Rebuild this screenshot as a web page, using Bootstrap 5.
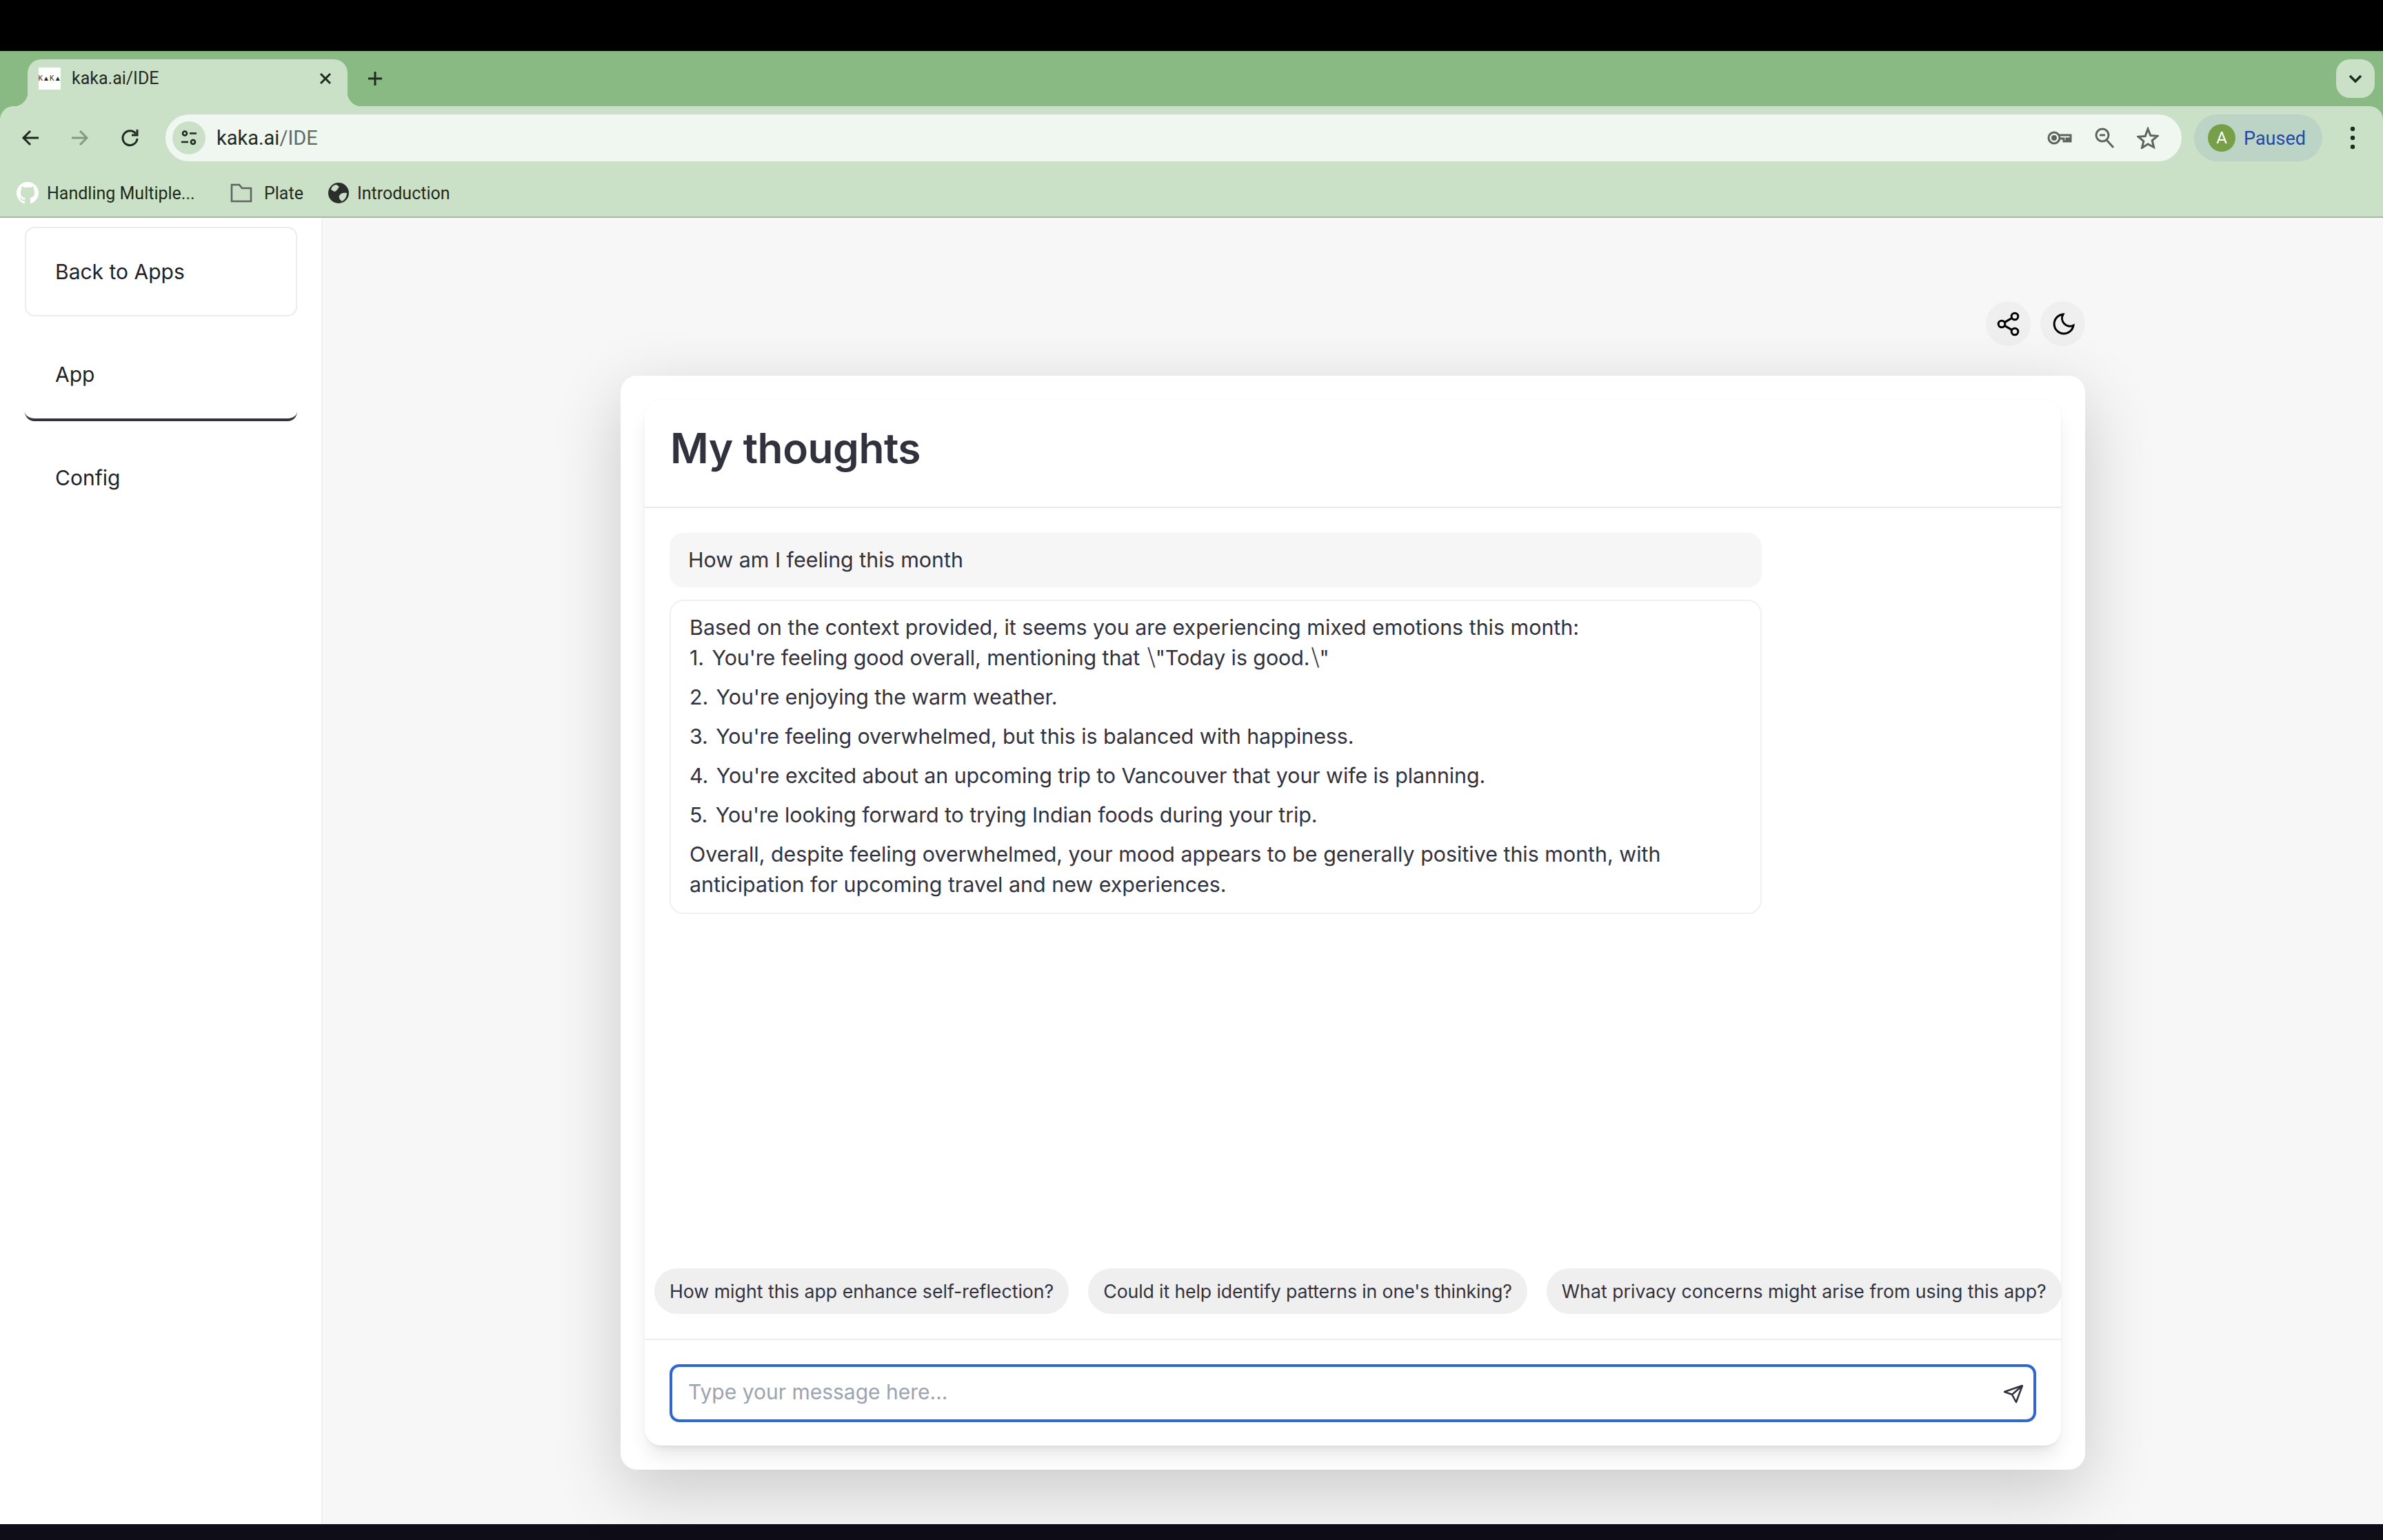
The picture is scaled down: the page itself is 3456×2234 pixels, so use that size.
<!doctype html>
<html lang="en">
<head>
<meta charset="utf-8">
<title>kaka.ai/IDE</title>
<link href="https://cdn.jsdelivr.net/npm/bootstrap@5.3.0/dist/css/bootstrap.min.css" rel="stylesheet">
<style>
html,body{height:2234px;overflow:hidden;background:#000;}
body{width:3456px;display:flex;flex-direction:column;font-family:"Inter","Liberation Sans",sans-serif;}
.top-black{height:74px;background:#000;flex:none;}
.tabstrip{height:80px;background:#89ba84;flex:none;padding-top:12px;padding-left:40px;padding-right:12px;}
.chrome-ui{font-family:"Roboto","Liberation Sans",sans-serif;}
.tabitem{width:464px;height:68px;background:#cbe1c7;border-radius:20px 20px 0 0;position:relative;padding:0 16px 12px;font-size:25px;color:#1f2a20;}
.tabitem::before,.tabitem::after{content:"";position:absolute;bottom:0;width:20px;height:20px;}
.tabitem::before{left:-20px;background:radial-gradient(circle at 0 0,transparent 20px,#cbe1c7 20.5px);}
.tabitem::after{right:-20px;background:radial-gradient(circle at 100% 0,transparent 20px,#cbe1c7 20.5px);}
.favi{width:32px;height:32px;background:#fff;font-size:10px;color:#222;font-weight:400;flex:none;line-height:1;white-space:nowrap;overflow:hidden;font-family:"Liberation Sans",sans-serif;}
.chev-btn{width:56px;height:56px;background:#cbe1c7;border-radius:20px;}
.newtab{margin-left:28px;margin-top:16px;}
.toolbar-wrap{background:#89ba84;flex:none;}
.toolbar{height:92px;background:#cbe1c7;border-radius:20px 20px 0 0;padding:12px 0 0 0;}
.navzone{width:240px;flex:none;padding-left:31px;gap:46px;height:68px;}
.omni{flex:1 1 auto;height:68px;background:#f0f7f1;border-radius:34px;padding:0 33px 0 10px;font-size:29px;color:#1f2a20;}
.omni-chip{width:48px;height:48px;border-radius:50%;background:#cbe1c7;flex:none;margin-right:16px;}
.omni-url{padding-top:2px;}
.dim{color:#5f6b60;}
.omni-icons{gap:32px;}
.paused{width:186px;height:68px;flex:none;background:#bbd4c5;border-radius:34px;margin-left:18px;padding-left:20px;font-size:27px;color:#2149a8;gap:12px;}
.paused-txt{padding-top:2px;}
.avatar{width:40px;height:40px;border-radius:50%;background:#769f48;color:#fff;font-size:24px;flex:none;}
.dots{width:88px;flex:none;height:68px;}
.bookmarks{height:70px;background:#cbe1c7;flex:none;border-bottom:2px solid #a6b9a4;padding:0 0 0 24px;font-size:25px;color:#1f2a20;}
.bm{gap:12px;}
.bm span{padding-top:2px;}
.bm-a{width:310px;}
.bm-b{width:142px;gap:17px;}
.bm-c{gap:12px;}
.mainrow{flex:1 1 auto;min-height:0;background:#f7f7f7;}
.sidepanel{width:468px;flex:none;background:#fff;border-right:2px solid #f0f0f0;padding:13px 35px 0 36px;color:#1f2124;}
.sidelink{height:130px;padding:0 42px;font-size:30px;color:#1f2124;border-radius:14px;display:flex;align-items:center;border:2px solid transparent;margin-bottom:20px;}
.sidelink:hover,.sidelink:focus{color:#1f2124;}
.sidelink.bordered{border-color:#ececec;}
.sidelink.under{border-width:0 0 4px;border-color:#33323f;height:132px;margin-bottom:17px;padding:0 44px;}
.stage{flex:1 1 auto;min-width:0;padding-top:121px;}
.stage-inner{width:2124px;margin:0 auto;}
.round-btn{width:65px;height:65px;border-radius:50%;background:#efefef;border:0;padding:0;}
.btnrow{gap:14px;margin-bottom:43px;}
.outer{height:1587px;background:#fff;border:0;border-radius:24px;padding:35px;box-shadow:0 30px 100px rgba(0,0,0,.19);}
.inner{height:100%;background:#fff;border:0;border-radius:24px;box-shadow:0 20px 30px -6px rgba(0,0,0,.1),0 8px 12px -8px rgba(0,0,0,.1),0 0 4px rgba(0,0,0,.03);color:#32323e;}
.inner-head{height:157px;padding:0 37px 14px;border-bottom:2px solid #e8e8e8;flex:none;}
.title{font-size:60.5px;font-weight:560;color:#32323e;margin:0;letter-spacing:-.5px;}
.msgs{flex:1 1 auto;min-height:0;padding:36px 36px 0;font-size:30.4px;}
.bubble{width:1584px;}
.bub-user{height:79px;background:#f6f6f6;border-radius:20px;padding:0 27px;margin-bottom:18px;}
.bub-bot{height:456px;background:#fff;border:2px solid #f0f0f0;border-radius:20px;padding:16px 27px;line-height:44px;}
.bub-bot div{margin-bottom:13px;}
.bub-bot div.tight{margin-bottom:0;}
.bub-bot div.item{letter-spacing:-.08px;}
.nsp{margin-right:3px;}
.bslash{font-family:"DejaVu Sans",sans-serif;font-size:36px;font-weight:300;line-height:1;margin:0 0 0 2px;}
.chips{padding-left:14px;gap:28px;flex:none;height:66px;margin-bottom:36px;}
.chipb{height:66px;background:#efefef;border-radius:33px;padding:0 22px;font-size:26.7px;color:#32323e;flex:none;white-space:nowrap;border:0;}
.chipb.tighter{letter-spacing:-.13px;}
.composer{height:155px;border-top:2px solid #ededed;padding:35px 36px 0;flex:none;position:relative;}
.msginput{height:84px;border:4px solid #2f66cf;border-radius:14px;font-size:30px;padding:0 80px 4px 23px;color:#32323e;font-family:inherit;}
.msginput::placeholder{color:#9ca3af;}
.msginput:focus{border-color:#2f66cf;box-shadow:none;}
.sendico{position:absolute;right:55px;top:65px;}
.bottom-dark{height:23px;background:#0e0d18;flex:none;}
</style>
</head>
<body>
<div class="top-black"></div>

<div class="tabstrip d-flex chrome-ui">
  <div class="tabitem d-flex align-items-center">
    <div class="favi d-flex align-items-center justify-content-center">K▲K▲</div>
    <span class="ms-3">kaka.ai/IDE</span>
    <svg class="ms-auto me-1" width="24" height="24" viewBox="0 0 24 24" fill="none" stroke="#1f2a20" stroke-width="3"><path d="M5 5l14 14M19 5L5 19"/></svg>
  </div>
  <svg class="newtab align-self-start" width="24" height="24" viewBox="0 0 24 24" fill="none" stroke="#1f2a20" stroke-width="3"><path d="M12 2v20M2 12h20"/></svg>
  <div class="chev-btn ms-auto d-flex align-items-center justify-content-center">
    <svg width="20" height="14" viewBox="0 0 20 14" fill="none" stroke="#1f2a20" stroke-width="3.5"><path d="M2 3l8 8 8-8"/></svg>
  </div>
</div>

<div class="toolbar-wrap">
<div class="toolbar d-flex chrome-ui align-items-start">
  <div class="navzone d-flex align-items-center">
    <svg width="26" height="26" viewBox="0 0 26 26" fill="none" stroke="#1f2a20" stroke-width="3"><path d="M25 13H3M13 3L3 13l10 10"/></svg>
    <svg width="26" height="26" viewBox="0 0 26 26" fill="none" stroke="#829a83" stroke-width="3"><path d="M1 13h22M13 3l10 10-10 10"/></svg>
    <svg width="26" height="28" viewBox="0 0 26 28" fill="none" stroke="#1f2a20" stroke-width="3"><path d="M22 8a10.5 10.5 0 1 0 2 7"/><path d="M24 2v8h-8" /></svg>
  </div>
  <div class="omni d-flex align-items-center">
    <div class="omni-chip d-flex align-items-center justify-content-center">
      <svg width="26" height="26" viewBox="0 0 26 26" fill="none" stroke="#1f2a20" stroke-width="2.6"><circle cx="7" cy="6.5" r="3"/><path d="M14 6.5h10M2 19h10"/><circle cx="19" cy="19" r="3"/></svg>
    </div>
    <span class="omni-url">kaka.ai<span class="dim">/IDE</span></span>
    <div class="omni-icons ms-auto d-flex align-items-center">
      <svg width="36" height="26" viewBox="0 0 36 26" fill="none" stroke="#5f6360" stroke-width="3"><circle cx="10" cy="13" r="8"/><circle cx="10" cy="13" r="2.5" fill="#5f6360"/><path d="M18 9h16v9h-3v-4h-3v4h-4v-4h-6"/></svg>
      <svg width="30" height="32" viewBox="0 0 30 32" fill="none" stroke="#5f6360" stroke-width="3"><circle cx="12" cy="12" r="9"/><path d="M8 12h8" /><path d="M18 19l10 11"/></svg>
      <svg width="32" height="32" viewBox="0 0 32 32" fill="none" stroke="#5f6360" stroke-width="3" stroke-linejoin="miter"><path d="M16 3l3.8 9.5 10 .8-7.6 6.5 2.4 9.7L16 25l-8.6 5.5 2.4-9.7-7.6-6.5 10-.8z"/></svg>
    </div>
  </div>
  <div class="paused d-flex align-items-center">
    <div class="avatar d-flex align-items-center justify-content-center">A</div>
    <span class="paused-txt">Paused</span>
  </div>
  <div class="dots d-flex align-items-center justify-content-center">
    <svg width="8" height="36" viewBox="0 0 8 36" fill="#1f2a20"><circle cx="4" cy="5" r="3.2"/><circle cx="4" cy="18" r="3.2"/><circle cx="4" cy="31" r="3.2"/></svg>
  </div>
</div>
</div>

<div class="bookmarks d-flex align-items-center chrome-ui">
  <div class="bm bm-a d-flex align-items-center">
    <svg width="32" height="32" viewBox="0 0 16 16" fill="#fff"><path d="M8 0C3.58 0 0 3.58 0 8c0 3.54 2.29 6.53 5.47 7.59.4.07.55-.17.55-.38 0-.19-.01-.82-.01-1.49-2.01.37-2.53-.49-2.69-.94-.09-.23-.48-.94-.82-1.13-.28-.15-.68-.52-.01-.53.63-.01 1.08.58 1.23.82.72 1.21 1.87.87 2.33.66.07-.52.28-.87.51-1.07-1.78-.2-3.64-.89-3.64-3.95 0-.87.31-1.59.82-2.15-.08-.2-.36-1.02.08-2.12 0 0 .67-.21 2.2.82.64-.18 1.32-.27 2-.27.68 0 1.36.09 2 .27 1.53-1.04 2.2-.82 2.2-.82.44 1.1.16 1.92.08 2.12.51.56.82 1.27.82 2.15 0 3.07-1.87 3.75-3.65 3.95.29.25.54.73.54 1.48 0 1.07-.01 1.93-.01 2.2 0 .21.15.46.55.38A8.013 8.013 0 0016 8c0-4.42-3.58-8-8-8z"/></svg>
    <span>Handling Multiple...</span>
  </div>
  <div class="bm bm-b d-flex align-items-center">
    <svg width="32" height="28" viewBox="0 0 32 28" fill="none" stroke="#5f6360" stroke-width="2.6"><path d="M2 2h11l4 5h13v19H2z"/></svg>
    <span>Plate</span>
  </div>
  <div class="bm bm-c d-flex align-items-center">
    <svg width="30" height="30" viewBox="0 0 30 30"><circle cx="15" cy="15" r="15" fill="#2b2f2c"/><path d="M12 3C8 3 5 6 4 10l5 3c4-1 5-5 7-7z" fill="#cbe1c7"/><path d="M27 15c-5-1-9 0-11 4-1 3 1 6 4 8 4-2 7-7 7-12z" fill="#cbe1c7"/></svg>
    <span>Introduction</span>
  </div>
</div>

<div class="mainrow d-flex">
  <aside class="sidepanel">
    <nav class="nav flex-column">
      <a class="nav-link sidelink bordered" href="#">Back to Apps</a>
      <a class="nav-link sidelink under" href="#">App</a>
      <a class="nav-link sidelink" href="#">Config</a>
    </nav>
  </aside>
  <main class="stage">
    <div class="stage-inner">
      <div class="btnrow d-flex justify-content-end">
        <button class="btn round-btn d-flex align-items-center justify-content-center" aria-label="Share">
          <svg width="34" height="36" viewBox="0 0 34 36" fill="none" stroke="#000" stroke-width="3"><circle cx="26" cy="7" r="4.8"/><circle cx="7" cy="18" r="4.8"/><circle cx="26" cy="29" r="4.8"/><path d="M11.2 15.6l10.6-6.2M11.2 20.4l10.6 6.2"/></svg>
        </button>
        <button class="btn round-btn d-flex align-items-center justify-content-center" aria-label="Theme">
          <svg width="34" height="34" viewBox="0 0 34 34" fill="none" stroke="#000" stroke-width="3"><path d="M17 3a14 14 0 1 0 15 16 11.5 11.5 0 0 1-15-16z"/></svg>
        </button>
      </div>
      <div class="card outer">
        <div class="card inner d-flex flex-column">
          <div class="inner-head d-flex align-items-center">
            <h1 class="title">My thoughts</h1>
          </div>
          <div class="msgs">
            <div class="bubble bub-user d-flex align-items-center">How am I feeling this month</div>
            <div class="bubble bub-bot">
              <div class="tight">Based on the context provided, it seems you are experiencing mixed emotions this month:</div>
              <div class="item"><span class="nsp">1.</span> You're feeling good overall, mentioning that <span class="bslash">\</span>"Today is good.<span class="bslash">\</span>"</div>
              <div class="item"><span class="nsp">2.</span> You're enjoying the warm weather.</div>
              <div class="item"><span class="nsp">3.</span> You're feeling overwhelmed, but this is balanced with happiness.</div>
              <div class="item"><span class="nsp">4.</span> You're excited about an upcoming trip to Vancouver that your wife is planning.</div>
              <div class="item"><span class="nsp">5.</span> You're looking forward to trying Indian foods during your trip.</div>
              <div class="tight">Overall, despite feeling overwhelmed, your mood appears to be generally positive this month, with<br>anticipation for upcoming travel and new experiences.</div>
            </div>
          </div>
          <div class="chips d-flex">
            <button class="btn chipb">How might this app enhance self-reflection?</button>
            <button class="btn chipb tighter">Could it help identify patterns in one's thinking?</button>
            <button class="btn chipb">What privacy concerns might arise from using this app?</button>
          </div>
          <div class="composer">
            <input class="form-control msginput" type="text" placeholder="Type your message here...">
            <svg class="sendico" width="28" height="27" viewBox="0 0 28 27" fill="none" stroke="#32323e" stroke-width="2.6" stroke-linejoin="round"><path d="M27 1L1 10l11 4 6 11zM12 14L27 1"/></svg>
          </div>
        </div>
      </div>
    </div>
  </main>
</div>
<div class="bottom-dark"></div>
<script src="https://cdn.jsdelivr.net/npm/bootstrap@5.3.0/dist/js/bootstrap.bundle.min.js"></script>
</body>
</html>
